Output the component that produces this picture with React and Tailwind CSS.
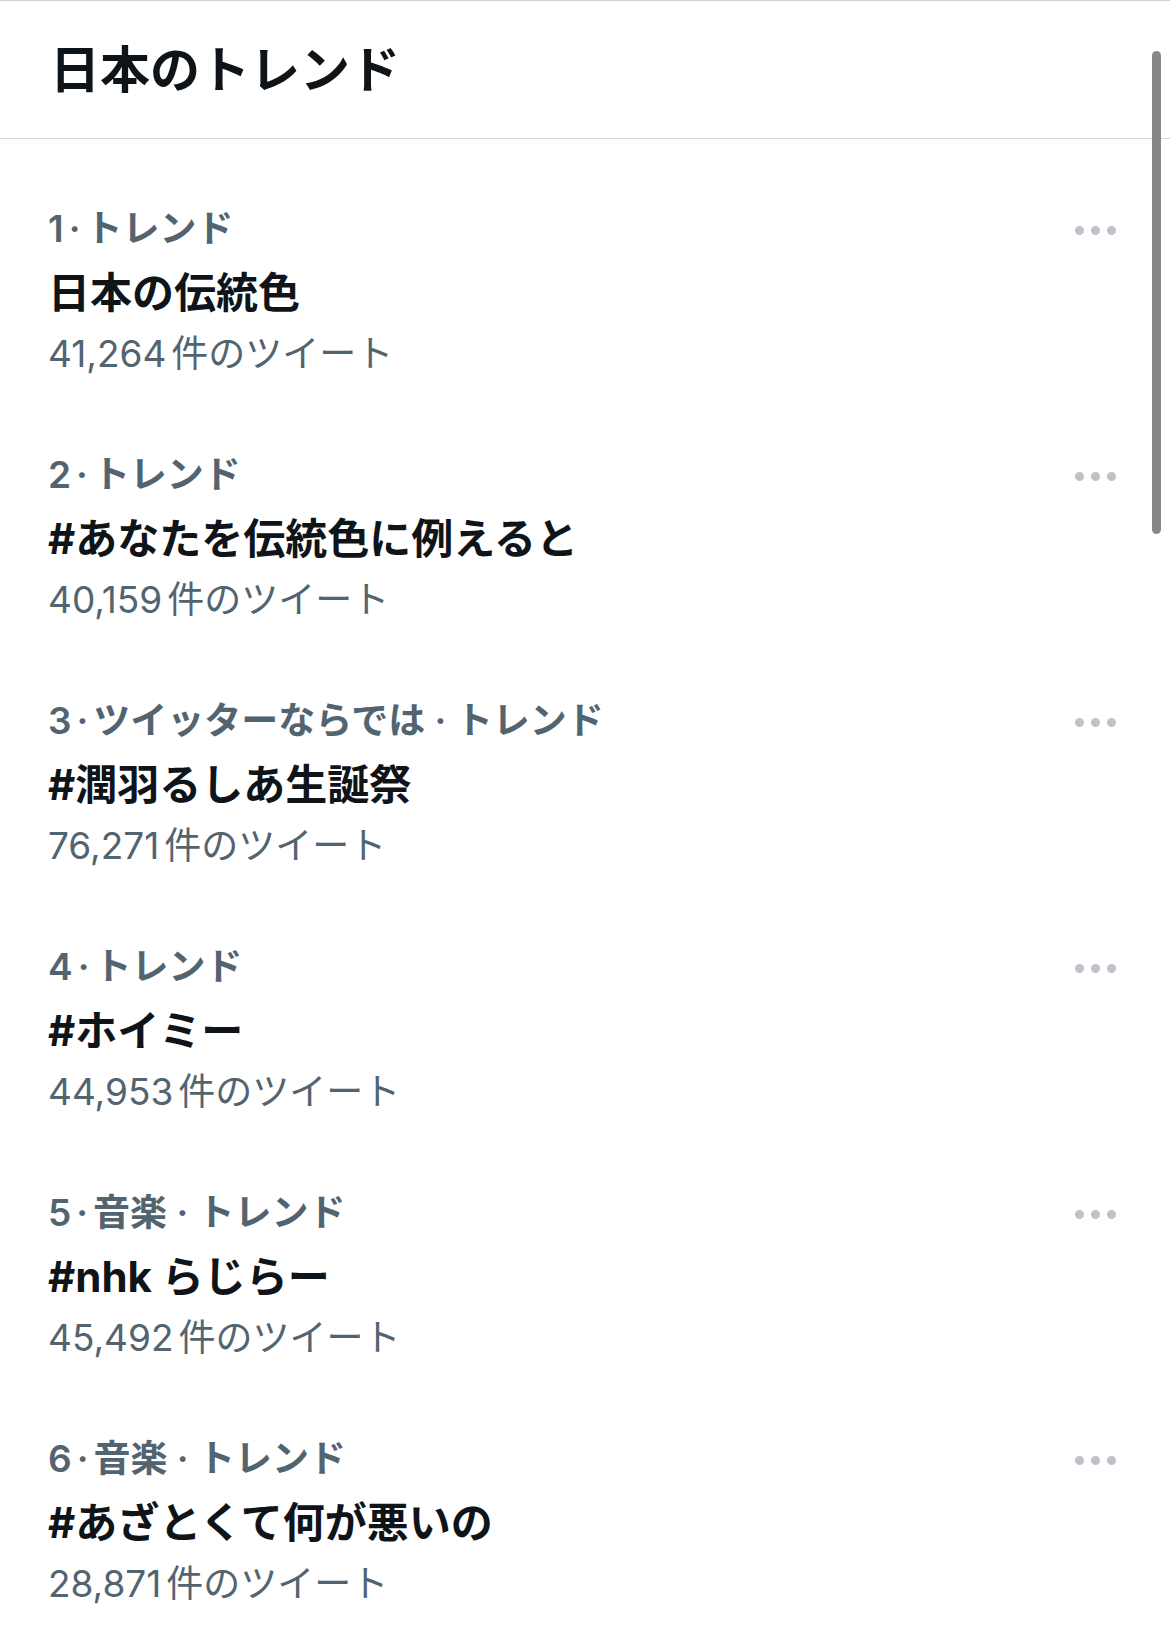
import React from 'react';

const trends = [
  { rank: 1, category: null, title: '日本の伝統色', count: '41,264' },
  { rank: 2, category: null, title: '#あなたを伝統色に例えると', count: '40,159' },
  { rank: 3, category: 'ツイッターならでは', title: '#潤羽るしあ生誕祭', count: '76,271' },
  { rank: 4, category: null, title: '#ホイミー', count: '44,953' },
  { rank: 5, category: '音楽', title: '#nhk らじらー', count: '45,492' },
  { rank: 6, category: '音楽', title: '#あざとくて何が悪いの', count: '28,871' },
];

const fontStack = { fontFamily: 'Inter, "Noto Sans CJK JP", sans-serif' };

const MoreDots = () => (
  <div className="flex items-center gap-[7px] pt-[2px]">
    <span className="w-[9px] h-[9px] rounded-full bg-[#bcc3ca]" />
    <span className="w-[9px] h-[9px] rounded-full bg-[#bcc3ca]" />
    <span className="w-[9px] h-[9px] rounded-full bg-[#bcc3ca]" />
  </div>
);

const TrendItem = ({ trend }) => {
  return (
    <div className="flex justify-between pl-[48px] pr-[54px] pt-[36px] pb-[37px]">
      <div className="flex flex-col">
        <div className="text-[37px] leading-[48px] font-semibold text-[#536471] whitespace-nowrap">
          {trend.rank}
          <span className="mx-[5px]">·</span>
          {trend.category ? `${trend.category} · ` : ''}トレンド
        </div>
        <div className="mt-[16px] text-[42px] leading-[48px] font-bold text-[#0f1419] whitespace-nowrap">
          {trend.title}
        </div>
        <div className="mt-[13px] text-[37px] leading-[48px] text-[#536471] whitespace-nowrap">
          {trend.count}
          <span className="ml-[5px]">件のツイート</span>
        </div>
      </div>
      <div className="h-[48px] flex items-center">
        <MoreDots />
      </div>
    </div>
  );
};

const App = () => {
  return (
    <div className="relative w-[1170px] h-[1638px] overflow-hidden bg-white border-t border-[#cfd3d6]" style={fontStack}>
      {/* Header */}
      <div className="h-[138px] flex items-center pl-[50px] border-b border-[#d6d8da]">
        <h1 className="text-[50px] leading-none font-bold text-[#0f1419]">日本のトレンド</h1>
      </div>

      {/* Trend list */}
      <div className="pt-[30px]">
        {trends.map((trend) => (
          <TrendItem key={trend.rank} trend={trend} />
        ))}
      </div>

      {/* Overlay scrollbar */}
      <div className="absolute top-[50px] right-[9px] w-[9px] h-[483px] rounded-full bg-[#878787]" />
    </div>
  );
};

export default App;
